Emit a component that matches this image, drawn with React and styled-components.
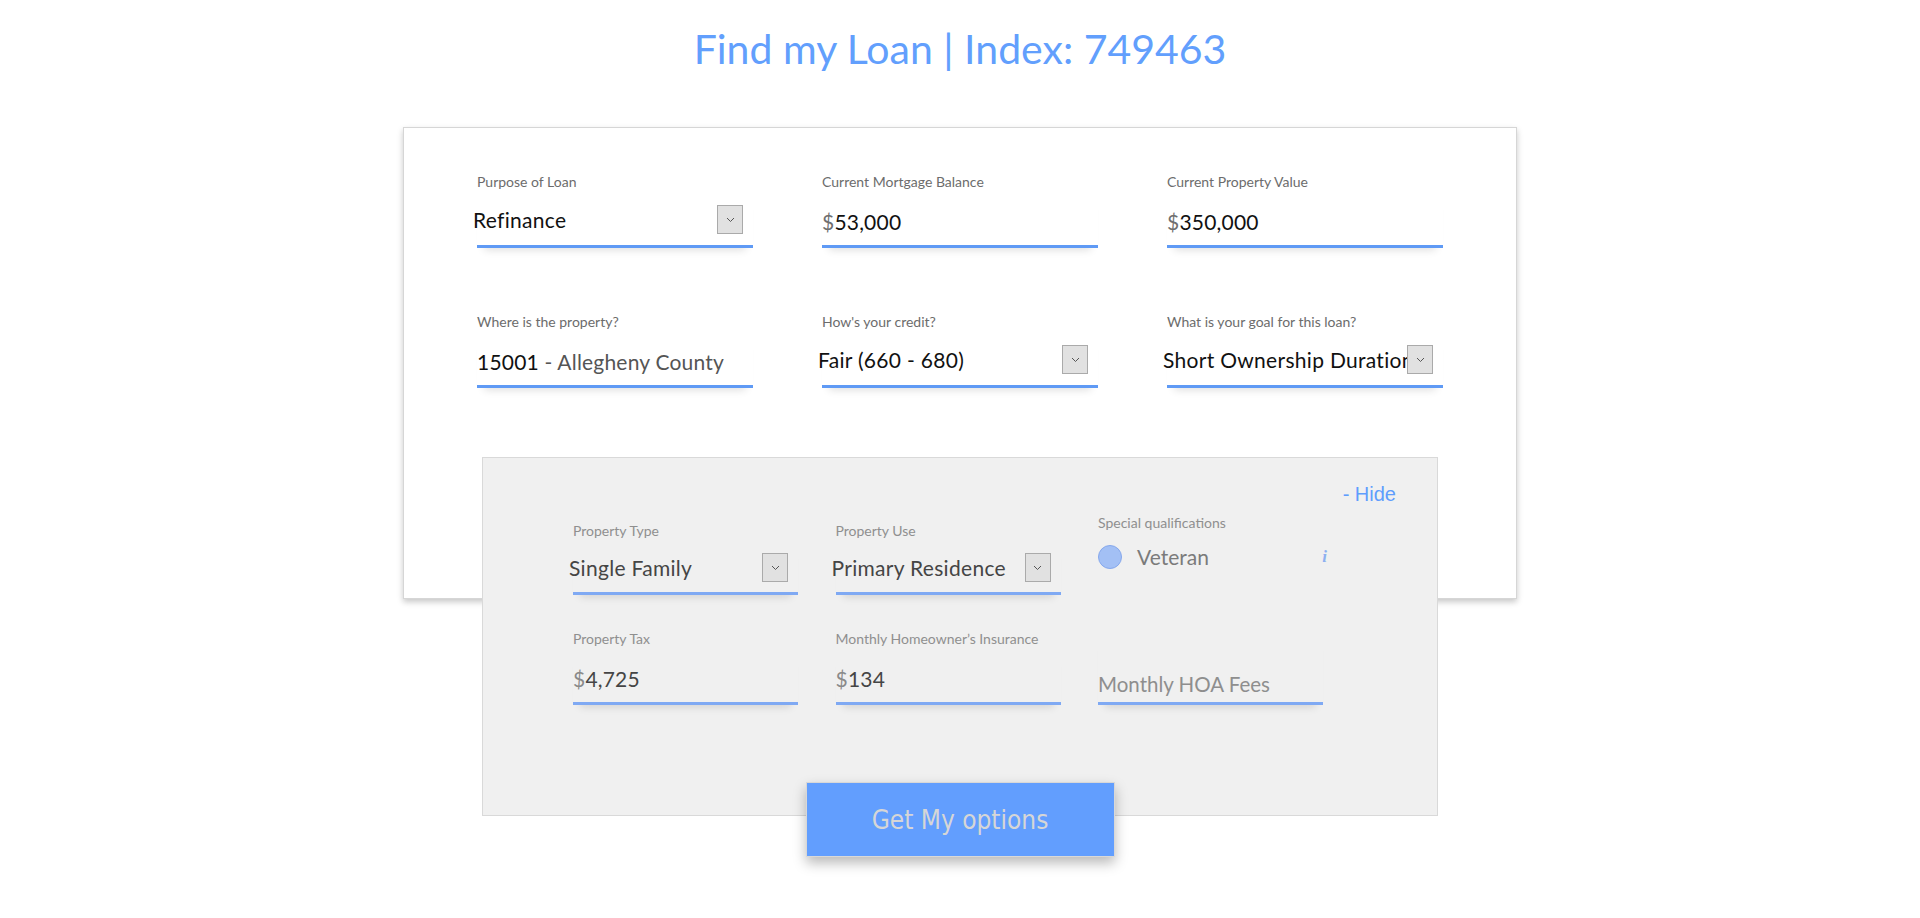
import React from "react"
import styled, { createGlobalStyle } from "styled-components"

const GlobalStyle = createGlobalStyle`
  body {
    margin: 0;
    background: #fff;
    font-family: Lato, "Open Sans", sans-serif;
  }
`

const Page = styled.div`
  display: flex;
  flex-direction: column;
  align-items: center;
  padding-bottom: 60px;
`

const Title = styled.h1`
  margin: 24px 0 0;
  font-weight: 400;
  font-size: 41px;
  line-height: 50px;
  color: #629ffd;
`

const Card = styled.div`
  margin-top: 53px;
  width: 1114px;
  height: 472px;
  box-sizing: border-box;
  padding: 45px 73px 0;
  border: 1px solid #d6d6d6;
  background: #fff;
  box-shadow: 0 3px 6px rgba(0, 0, 0, 0.22);
`

const Grid = styled.div`
  display: grid;
  grid-template-columns: repeat(3, ${(p) => p.$col}px);
  column-gap: ${(p) => p.$gap}px;
  row-gap: ${(p) => p.$rowGap}px;
  margin-top: ${(p) => p.$top || 0}px;
`

const Field = styled.div`
  display: flex;
  flex-direction: column;
  margin-top: ${(p) => p.$shift || 0}px;
`

const Label = styled.span`
  font-size: 14px;
  line-height: ${(p) => (p.$small ? 16 : 17)}px;
  color: ${(p) => (p.$muted ? "#8f8f8f" : "#6c6c6c")};
  white-space: nowrap;
`

const Control = styled.div`
  display: flex;
  align-items: flex-end;
  box-sizing: border-box;
  height: ${(p) => p.$h}px;
  padding-bottom: ${(p) => p.$pb}px;
  padding-right: ${(p) => (p.$select ? 10 : 0)}px;
  border-bottom: 3px solid ${(p) => (p.$soft ? "#7fa9f3" : "#5f9af5")};
  box-shadow: 0 9px 8px -7px rgba(0, 0, 0, 0.13);
`

const SelectRow = styled.div`
  display: flex;
  align-items: center;
  width: calc(100% + 4px);
  margin-left: -4px;
`

const SelectText = styled.span`
  flex: 1;
  min-width: 0;
  overflow: hidden;
  white-space: nowrap;
  font-size: 21px;
  line-height: 24px;
  letter-spacing: 0.3px;
  color: ${(p) => (p.$muted ? "#454545" : "#111")};
`

const DropButton = styled.span`
  flex: 0 0 26px;
  height: 29px;
  box-sizing: border-box;
  display: flex;
  align-items: center;
  justify-content: center;
  background: #e1e1e1;
  border: 1px solid #aaa;
`

const Value = styled.span`
  font-size: 21px;
  line-height: 24px;
  letter-spacing: 0.2px;
  white-space: nowrap;
  color: ${(p) => (p.$muted ? "#454545" : "#111")};
`

const Dim = styled.span`
  color: ${(p) => p.$c || "#6f6f6f"};
`

const Placeholder = styled.span`
  font-size: 20.5px;
  line-height: 24px;
  color: #8e8e8e;
`

const Panel = styled.div`
  position: relative;
  z-index: 1;
  margin-top: -142px;
  width: 956px;
  height: 359px;
  box-sizing: border-box;
  padding: 25px 41px 0 90px;
  background: #f0f0f0;
  border: 1px solid #d9d9d9;
`

const HideLink = styled.div`
  text-align: right;
  font-family: "Liberation Sans", Arial, sans-serif;
  font-size: 20px;
  line-height: 22px;
  color: #5f9dfd;
  cursor: pointer;
`

const CheckRow = styled.div`
  display: flex;
  align-items: center;
  margin-top: 14px;
`

const Radio = styled.span`
  width: 24px;
  height: 24px;
  box-sizing: border-box;
  border-radius: 50%;
  background: #a3c0f5;
  border: 1px solid #86a8ec;
`

const CheckText = styled.span`
  flex: 1;
  margin-left: 15px;
  font-size: 21px;
  line-height: 24px;
  color: #7b7b7b;
`

const Info = styled.span`
  font-family: "Liberation Serif", serif;
  font-style: italic;
  font-weight: 700;
  font-size: 17px;
  color: #8db0f0;
  margin-right: -4px;
`

const GetButton = styled.button`
  position: relative;
  z-index: 2;
  margin-top: -34px;
  width: 309px;
  height: 75px;
  box-sizing: border-box;
  display: flex;
  align-items: center;
  justify-content: center;
  background: #629efe;
  border: 1px solid #d8d8d8;
  color: #d6d6d6;
  font-family: "DejaVu Sans Condensed", "DejaVu Sans", sans-serif;
  font-size: 26px;
  box-shadow: 0 6px 12px rgba(0, 0, 0, 0.28);
  cursor: pointer;
`

const Chevron = () => (
  <svg width="9" height="6" viewBox="0 0 9 6">
    <polyline points="1,1 4.5,4.5 8,1" fill="none" stroke="#555" strokeWidth="1" />
  </svg>
)

const SelectField = ({ label, value, h, pb, small, muted, soft }) => (
  <Field>
    <Label $small={small} $muted={muted}>{label}</Label>
    <Control $h={h} $pb={pb} $select $soft={soft}>
      <SelectRow>
        <SelectText $muted={muted}>{value}</SelectText>
        <DropButton>
          <Chevron />
        </DropButton>
      </SelectRow>
    </Control>
  </Field>
)

const InputField = ({ label, children, h, pb, small, muted, soft }) => (
  <Field>
    <Label $small={small} $muted={muted}>{label}</Label>
    <Control $h={h} $pb={pb} $soft={soft}>
      {children}
    </Control>
  </Field>
)

export default function App() {
  return (
    <Page>
      <GlobalStyle />
      <Title>Find my Loan | Index: 749463</Title>
      <Card>
        <Grid $col={276} $gap={69} $rowGap={65}>
          <SelectField label="Purpose of Loan" value="Refinance" h={58} pb={11} />
          <InputField label="Current Mortgage Balance" h={58} pb={11}>
            <Value>
              <Dim>$</Dim>53,000
            </Value>
          </InputField>
          <InputField label="Current Property Value" h={58} pb={11}>
            <Value>
              <Dim>$</Dim>350,000
            </Value>
          </InputField>
          <InputField label="Where is the property?" h={58} pb={11}>
            <Value>
              15001 <Dim $c="#555">- Allegheny County</Dim>
            </Value>
          </InputField>
          <SelectField label="How's your credit?" value="Fair (660 - 680)" h={58} pb={11} />
          <SelectField label="What is your goal for this loan?" value="Short Ownership Duration" h={58} pb={11} />
        </Grid>
      </Card>
      <Panel>
        <HideLink>- Hide</HideLink>
        <Grid $col={225} $gap={37.5} $rowGap={36} $top={18}>
          <SelectField label="Property Type" value="Single Family" h={56} pb={10} small muted soft />
          <SelectField label="Property Use" value="Primary Residence" h={56} pb={10} small muted soft />
          <Field $shift={-9}>
            <Label $muted>Special qualifications</Label>
            <CheckRow>
              <Radio />
              <CheckText>Veteran</CheckText>
              <Info>i</Info>
            </CheckRow>
          </Field>
          <InputField label="Property Tax" h={58} pb={11} small muted soft>
            <Value $muted>
              <Dim $c="#8a8a8a">$</Dim>4,725
            </Value>
          </InputField>
          <InputField label="Monthly Homeowner’s Insurance" h={58} pb={11} small muted soft>
            <Value $muted>
              <Dim $c="#8a8a8a">$</Dim>134
            </Value>
          </InputField>
          <InputField label="" h={74} pb={6} small muted soft>
            <Placeholder>Monthly HOA Fees</Placeholder>
          </InputField>
        </Grid>
      </Panel>
      <GetButton>Get My options</GetButton>
    </Page>
  )
}
